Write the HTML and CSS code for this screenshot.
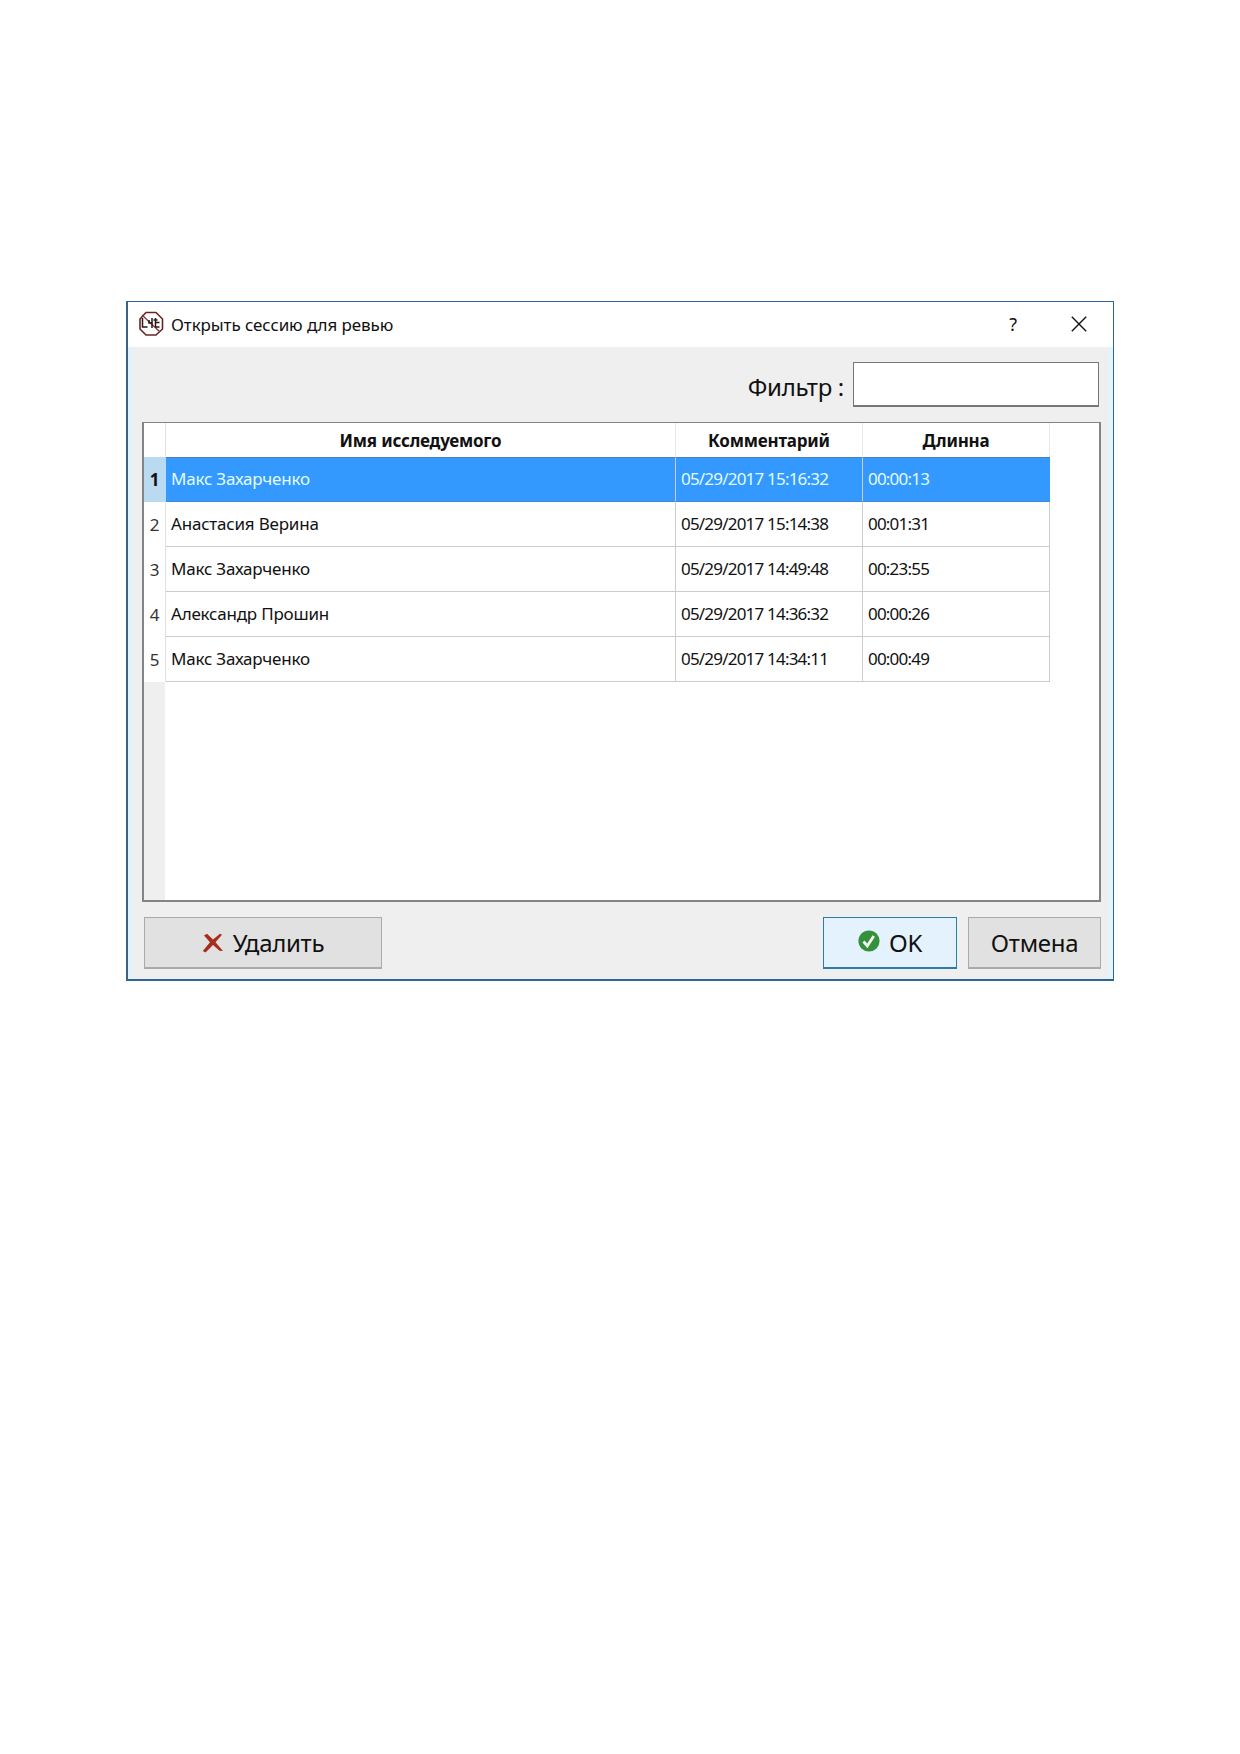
FILE: index.html
```html
<!DOCTYPE html>
<html lang="ru">
<head>
<meta charset="utf-8">
<title>Открыть сессию для ревью</title>
<link rel="stylesheet" href="styles.css">
</head>
<body>
<main class="dialog">
  <header class="titlebar">
    <svg class="logo" viewBox="0 0 26 26" fill="none">
      <path d="M8 1.5h10l6.500 6.500v10l-6.500 6h-10l-6-6v-10z" stroke="#6b2424" stroke-width="1.600" stroke-linejoin="round"/>
      <path d="M4 4l18 17" stroke="#8c3a3a" stroke-width="1.300"/>
      <path d="M4.500 7v9h5M11 9v3h3V7M14 12v5M17.500 7v9h4M17.500 11.500h4M15.500 9h4" stroke="#2b1518" stroke-width="1.500"/>
    </svg>
    <h1 class="title">Открыть сессию для ревью</h1>
    <span class="help">?</span>
    <svg class="close" viewBox="0 0 16 16"><path d="M.8.8l14.400 14.400M15.200.8L.8 15.200" stroke="#111" stroke-width="1.400"/></svg>
  </header>
  <section class="content">
    <label class="filter"><span class="filter-label">Фильтр :</span><input class="filter-input" type="text"></label>
    <div class="table">
      <div class="row head"><span class="num"></span><span class="cell name">Имя исследуемого</span><span class="cell date">Комментарий</span><span class="cell length">Длинна</span></div>
      <div class="row selected"><span class="num">1</span><span class="cell name">Макс Захарченко</span><span class="cell date">05/29/2017 15:16:32</span><span class="cell length">00:00:13</span></div>
      <div class="row"><span class="num">2</span><span class="cell name">Анастасия Верина</span><span class="cell date">05/29/2017 15:14:38</span><span class="cell length">00:01:31</span></div>
      <div class="row"><span class="num">3</span><span class="cell name">Макс Захарченко</span><span class="cell date">05/29/2017 14:49:48</span><span class="cell length">00:23:55</span></div>
      <div class="row"><span class="num">4</span><span class="cell name">Александр Прошин</span><span class="cell date">05/29/2017 14:36:32</span><span class="cell length">00:00:26</span></div>
      <div class="row"><span class="num">5</span><span class="cell name">Макс Захарченко</span><span class="cell date">05/29/2017 14:34:11</span><span class="cell length">00:00:49</span></div>
      <div class="gutter"></div>
    </div>
    <footer class="actions">
      <button class="button delete">
        <svg class="icon-x" viewBox="0 0 22 20"><path d="M2 2.500L5 .8 11 6.500 18 .8l2 1-6.500 7.400 7.500 8.800-3.500-.3L11 12l-7.500 7.500L.8 18 8 9.300z" fill="#a82d1c"/></svg>
        <span>Удалить</span>
      </button>
      <button class="button ok">
        <svg class="icon-ok" viewBox="0 0 22 22"><circle cx="11" cy="11" r="10.600" fill="#34903a"/><path d="M5.500 11.500l3.800 4.500 6.500-10" fill="none" stroke="#f1fbef" stroke-width="2.800"/></svg>
        <span>OK</span>
      </button>
      <button class="button cancel"><span>Отмена</span></button>
    </footer>
  </section>
</main>
</body>
</html>
```
FILE: styles.css
```css
* { box-sizing: border-box; }
body {
  margin: 0;
  min-height: 1754px;
  padding: 301px 0 0 126px;
  background: #fff;
  color: #111;
  font-family: "Noto Sans", "Open Sans", sans-serif;
  font-size: 17px;
}
.dialog {
  display: flex;
  flex-direction: column;
  width: 988px;
  height: 680px;
  border: 1px solid #2c6696;
  border-left: 2px solid #3a6485;
  border-bottom: 2px solid #2c6696;
  background: #efefef;
}
.titlebar {
  display: flex;
  align-items: center;
  height: 45px;
  padding: 0 26px 0 10px;
  background: #fff;
}
.logo { width: 26px; height: 26px; margin-top: -2px; }
.title {
  margin: 0 auto 0 7px;
  font-size: 17px;
  font-weight: 400;
  letter-spacing: -0.1px;
}
.help { margin: -2px 54px 0 0; font-size: 18px; }
.close { width: 16px; height: 16px; margin-top: -2px; }
.content {
  display: flex;
  flex: 1;
  flex-direction: column;
  padding: 15px 12px 10px 14px;
  border-left: 5px solid #e3f2f6;
  border-right: 5px solid #e3f4fa;
  margin: 0;
  padding-left: 9px;
  padding-right: 7px;
}
.filter {
  display: flex;
  align-items: center;
  justify-content: flex-end;
  gap: 9px;
  height: 45px;
  margin-right: 2px;
}
.filter-label { font-size: 24px; padding-top: 3px; letter-spacing: -0.3px; }
.filter-input {
  width: 246px;
  height: 45px;
  border: 1px solid #777;
  border-bottom-width: 2px;
  background: #fff;
}
.table {
  display: flex;
  flex-direction: column;
  height: 480px;
  margin-top: 15px;
  border: 2px solid #828587;
  border-top-width: 1px;
  background: #fff;
}
.row { display: flex; height: 45px; line-height: 44px; }
.num {
  width: 22px;
  border-right: 1px solid #e2e2e2;
  color: #333;
  text-align: center;
  padding-top: 1px;
}
.cell {
  padding-left: 5px;
  border-right: 1px solid #ccc;
  border-bottom: 1px solid #ccc;
  white-space: nowrap;
}
.name { width: 510px; letter-spacing: -0.2px; }
.date { width: 187px; letter-spacing: -0.8px; }
.length { width: 187px; letter-spacing: -0.8px; }
.head { height: 34px; line-height: 35px; font-weight: 700; text-align: center; }
.head .cell { padding: 0; border-bottom: 0; border-color: #e8e8e8; letter-spacing: -0.2px; }
.selected .cell { background: #3399ff; color: #e2fbff; border-bottom-color: #4388d4; border-top: 1px solid #4d80b0; line-height: 42px; }
.selected .length { border-right-color: #3399ff; }
.selected .num { background: #b9daf0; border-color: #b9daf0; color: #111; font-weight: 700; }
.gutter { flex: 1; width: 21px; background: #efefef; }
.actions { display: flex; height: 52px; margin: 15px 0 0 2px; }
.button {
  display: flex;
  align-items: center;
  justify-content: center;
  gap: 9px;
  padding: 0;
  border: 1px solid #aaa;
  border-bottom-width: 2px;
  background: #e1e1e1;
  color: #111;
  font: 24px "Noto Sans", "Open Sans", sans-serif;
  letter-spacing: -0.3px;
}
.delete { width: 238px; margin-right: auto; }
.ok { width: 134px; margin-right: 11px; background: #e3f2fd; border-color: #2b7ba5; }
.cancel { width: 133px; }
.icon-x { width: 22px; height: 20px; }
.icon-ok { width: 22px; height: 22px; margin-top: -3px; }
```
